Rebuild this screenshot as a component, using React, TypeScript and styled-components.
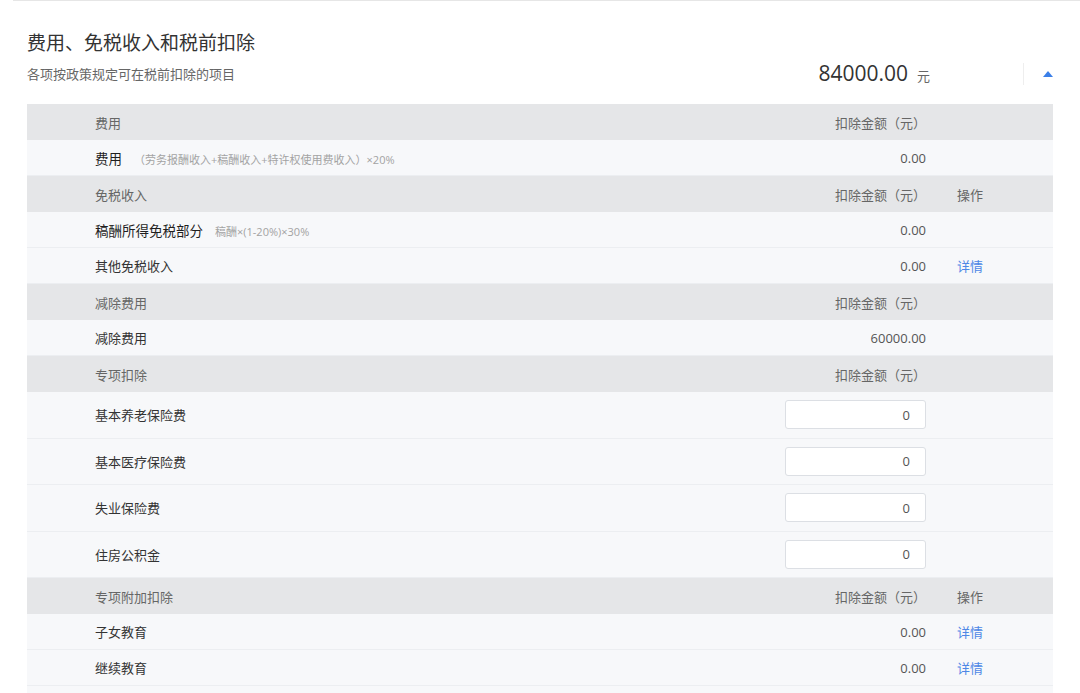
import React from "react";
import styled, { createGlobalStyle, css } from "styled-components";

const GlobalStyle = createGlobalStyle`
    html, body {
        margin: 0;
        padding: 0;
        background: #ffffff;
    }

    body {
        font-family: "Open Sans", "Noto Sans CJK SC", sans-serif;
        color: #333333;
        overflow: hidden;
    }
`;

const TopRule = styled.div`
    height: 1px;
    margin-left: 13px;
    background: #e6e6e6;
`;

const Section = styled.section`
    padding: 0 27px;
`;

const Title = styled.h2`
    margin: 29px 0 0;
    font-size: 19px;
    line-height: 26px;
    font-weight: 400;
    color: #333333;
`;

const Summary = styled.div`
    display: flex;
    align-items: center;
    height: 24px;
    margin-top: 6px;
`;

const Subtitle = styled.p`
    flex: 1;
    margin: 0;
    font-size: 13px;
    line-height: 18px;
    color: #666666;
`;

const Total = styled.div`
    display: flex;
    align-items: baseline;
    gap: 9px;
    font-size: 21px;
    line-height: 24px;
    color: #333333;
`;

const Unit = styled.span`
    font-size: 13px;
    color: #666666;
`;

const Divider = styled.span`
    width: 1px;
    height: 22px;
    margin-left: 93px;
    background: #eeeeee;
`;

const Toggle = styled.button`
    width: 0;
    height: 0;
    margin-left: 19px;
    padding: 0;
    border: none;
    border-left: 5px solid transparent;
    border-right: 5px solid transparent;
    border-bottom: 6px solid #3b7fe8;
    background: none;
    cursor: pointer;
`;

const Table = styled.div`
    margin-top: 18px;
    padding-bottom: 12px;
    background: #f7f8fa;
`;

type RowKind = "head" | "item" | "field";

const Row = styled.div<{ $kind: RowKind }>`
    display: grid;
    grid-template-columns: 1fr 220px 127px;
    align-items: center;
    box-sizing: border-box;
    font-size: 13px;

    ${({ $kind }) =>
        $kind === "head"
            ? css`
                  height: 36px;
                  background: #e5e6e8;
                  color: #666666;
              `
            : css`
                  height: ${$kind === "field" ? "46.5px" : "36px"};
                  background: #f7f8fa;
                  color: #333333;
                  border-bottom: 1px solid #eceef1;
              `}
`;

const Label = styled.div`
    display: flex;
    align-items: baseline;
    padding-left: 68px;
`;

const Name = styled.span<{ $strong?: boolean }>`
    color: ${({ $strong }) => ($strong ? "#1f1f1f" : "#333333")};
    font-size: ${({ $strong }) => ($strong ? "13.5px" : "13px")};
`;

const Hint = styled.span`
    margin-left: 12px;
    font-size: 11px;
    color: #a3a3a3;
`;

const Amount = styled.div<{ $head?: boolean }>`
    justify-self: end;
    color: ${({ $head }) => ($head ? "#666666" : "#555555")};
`;

const Op = styled.div`
    padding-left: 31px;
`;

const Link = styled.a`
    color: #4d87e6;
    text-decoration: none;
    cursor: pointer;
`;

const NumberInput = styled.input`
    justify-self: end;
    box-sizing: border-box;
    width: 141px;
    height: 29px;
    padding: 0 15px 0 8px;
    border: 1px solid #dcdfe4;
    border-radius: 3px;
    background: #ffffff;
    font-family: inherit;
    font-size: 13px;
    color: #555555;
    text-align: right;
    outline: none;
`;

type Item = { name: string; hint?: string; value?: string; detail?: boolean; input?: boolean };
type Group = { title: string; op?: boolean; items: Item[] };

const groups: Group[] = [
    {
        title: "费用",
        items: [{ name: "费用", hint: "（劳务报酬收入+稿酬收入+特许权使用费收入）×20%", value: "0.00" }],
    },
    {
        title: "免税收入",
        op: true,
        items: [
            { name: "稿酬所得免税部分", hint: "稿酬×(1-20%)×30%", value: "0.00" },
            { name: "其他免税收入", value: "0.00", detail: true },
        ],
    },
    {
        title: "减除费用",
        items: [{ name: "减除费用", value: "60000.00" }],
    },
    {
        title: "专项扣除",
        items: [
            { name: "基本养老保险费", input: true },
            { name: "基本医疗保险费", input: true },
            { name: "失业保险费", input: true },
            { name: "住房公积金", input: true },
        ],
    },
    {
        title: "专项附加扣除",
        op: true,
        items: [
            { name: "子女教育", value: "0.00", detail: true },
            { name: "继续教育", value: "0.00", detail: true },
        ],
    },
];

export default function App() {
    return (
        <>
            <GlobalStyle />
            <TopRule />
            <Section>
                <Title>费用、免税收入和税前扣除</Title>
                <Summary>
                    <Subtitle>各项按政策规定可在税前扣除的项目</Subtitle>
                    <Total>
                        84000.00<Unit>元</Unit>
                    </Total>
                    <Divider />
                    <Toggle aria-label="收起" />
                </Summary>
                <Table>
                    {groups.map((group) => (
                        <React.Fragment key={group.title}>
                            <Row $kind="head">
                                <Label>{group.title}</Label>
                                <Amount $head>扣除金额（元）</Amount>
                                <Op>{group.op ? "操作" : null}</Op>
                            </Row>
                            {group.items.map((item) => (
                                <Row key={item.name} $kind={item.input ? "field" : "item"}>
                                    <Label>
                                        <Name $strong={!!item.hint}>{item.name}</Name>
                                        {item.hint && <Hint>{item.hint}</Hint>}
                                    </Label>
                                    {item.input ? (
                                        <NumberInput defaultValue="0" />
                                    ) : (
                                        <Amount>{item.value}</Amount>
                                    )}
                                    <Op>{item.detail && <Link>详情</Link>}</Op>
                                </Row>
                            ))}
                        </React.Fragment>
                    ))}
                </Table>
            </Section>
        </>
    );
}
